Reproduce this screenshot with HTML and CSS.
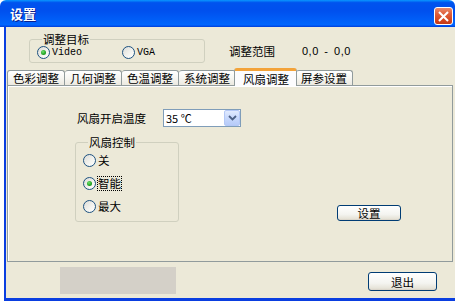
FILE: index.html
```html
<!DOCTYPE html>
<html lang="zh-CN">
<head>
<meta charset="utf-8">
<title>设置</title>
<link rel="stylesheet" href="styles.css">
</head>
<body>
<div class="window">
  <div class="titlebar">
    <span class="title">设置</span>
    <span class="close">
      <svg width="18" height="17" viewBox="0 0 18 17"><path d="M5 4.5 L13 12.5 M13 4.5 L5 12.5" stroke="#fff" stroke-width="2.2" stroke-linecap="square"/></svg>
    </span>
  </div>
  <div class="client">
    <div class="top">
      <div class="group target">
        <span class="group-title">调整目标</span>
        <div class="radio-row">
          <span class="radio"><span class="dot checked"></span><span class="latin">Video</span></span>
          <span class="radio vga"><span class="dot"></span><span class="latin">VGA</span></span>
        </div>
      </div>
      <span class="range-label">调整范围</span>
      <span class="range-value">0,0 - 0,0</span>
    </div>
    <div class="tabs">
      <span class="tab">色彩调整</span>
      <span class="tab">几何调整</span>
      <span class="tab">色温调整</span>
      <span class="tab">系统调整</span>
      <span class="tab active">风扇调整</span>
      <span class="tab">屏参设置</span>
    </div>
    <div class="panel">
      <div class="temp-row">
        <span class="temp-label">风扇开启温度</span>
        <span class="combo">
          <span class="combo-text">35 ℃</span>
          <span class="combo-btn">
            <svg width="9" height="6" viewBox="0 0 9 6"><path d="M1 1 L4.5 4.5 L8 1" fill="none" stroke="#4d6185" stroke-width="1.8"/></svg>
          </span>
        </span>
      </div>
      <div class="fan-row">
        <div class="group fan">
          <span class="group-title">风扇控制</span>
          <div class="radio-col">
            <span class="radio"><span class="dot"></span><span class="label">关</span></span>
            <span class="radio"><span class="dot checked"></span><span class="label focus">智能</span></span>
            <span class="radio"><span class="dot"></span><span class="label">最大</span></span>
          </div>
        </div>
        <span class="btn set-btn">设置</span>
      </div>
    </div>
    <div class="footer">
      <div class="placeholder"></div>
      <span class="btn exit-btn">退出</span>
    </div>
  </div>
</div>
</body>
</html>
```

FILE: styles.css
```css
* { box-sizing: border-box; }

body {
  margin: 0;
  background: #ffffff;
  font-family: "Noto Sans CJK SC", "Noto Sans", sans-serif;
  font-size: 11.5px;
  color: #000;
}

.window {
  width: 455px;
  height: 301px;
}

.titlebar {
  height: 27px;
  display: flex;
  justify-content: space-between;
  align-items: flex-start;
  padding: 0 2px 0 10px;
  border-radius: 6px 6px 0 0;
  background: linear-gradient(to bottom, #0997ff 0%, #0053ee 10%, #0050ee 40%, #0063fb 85%, #0066ff 92%, #003dd7 100%);
}

.title {
  line-height: 28px;
  color: #fff;
  font-weight: bold;
  font-size: 13px;
  text-shadow: 1px 1px 0 #0a1e8c;
}

.close {
  margin-top: 7px;
  width: 19px;
  height: 18px;
  border: 1px solid #fff;
  border-radius: 3px;
  background: linear-gradient(to bottom, #e98a6c 0%, #e0603c 35%, #d2431c 80%, #c23a18 100%);
  display: flex;
  align-items: center;
  justify-content: center;
}

.client {
  margin-left: 4px;
  height: 274px;
  background: #ece9d8;
  border-left: 2px solid #0a3ee0;
  border-bottom: 3px solid #0a3ee0;
}

/* top area */
.top {
  display: flex;
  align-items: center;
  padding: 12px 0 0 23px;
}

.group {
  border: 1px solid #d0d0bf;
  border-radius: 3px;
}

.group-title {
  display: block;
  width: max-content;
  height: 12px;
  line-height: 12px;
  margin: -7px 0 0 5px;
  padding: 0 1px;
  background: #ece9d8;
}

.target {
  width: 176px;
  height: 24px;
  padding: 0 0 0 7px;
}

.radio-row {
  display: flex;
  margin-top: 1px;
}

.radio {
  display: flex;
  align-items: center;
  height: 13px;
}

.vga { margin-left: 40px; }

.dot {
  width: 13px;
  height: 13px;
  border: 1px solid #1c5180;
  border-radius: 50%;
  background: linear-gradient(135deg, #dcdcd7 0%, #f4f4f0 60%, #ffffff 100%);
  display: flex;
  align-items: center;
  justify-content: center;
  flex: none;
}

.dot.checked::after {
  content: "";
  width: 5px;
  height: 5px;
  border-radius: 50%;
  background: radial-gradient(circle at 40% 35%, #6fe36f 0%, #21a121 60%, #1a8a1a 100%);
}

.latin {
  font-family: "Liberation Mono", "DejaVu Sans Mono", monospace;
  font-size: 10px;
  margin-left: 2px;
}

.range-label {
  margin-left: 24px;
}

.range-value {
  margin-left: 27px;
  font-family: "Liberation Sans", sans-serif;
  font-size: 11px;
  word-spacing: 2px;
  letter-spacing: 0.5px;
}

/* tabs */
.tabs {
  display: flex;
  align-items: flex-end;
  height: 17px;
  margin: 5px 0 0 1px;
}

.tab {
  height: 15px;
  line-height: 14px;
  padding: 0 5px;
  border: 1px solid #919b9c;
  border-bottom: none;
  border-left: none;
  border-radius: 3px 3px 0 0;
  background: linear-gradient(to bottom, #ffffff 0%, #f6f6f2 50%, #ece9e0 100%);
  white-space: nowrap;
}

.tab:first-child { border-left: 1px solid #919b9c; }

.tab.active {
  height: 18px;
  line-height: 17px;
  margin: 0 -1px -1px -2px;
  padding: 0 7px 0 8px;
  border-left: 1px solid #919b9c;
  border-top: 3px solid #f3a33a;
  background: #fcfcfe;
  position: relative;
  z-index: 1;
}

.tab.active + .tab { border-left: none; }

/* panel */
.panel {
  margin-left: 1px;
  width: 446px;
  height: 177px;
  border: 1px solid #919b9c;
  box-shadow: inset 1px 1px 0 #ffffff;
  background: #ece9d8;
}

.temp-row {
  display: flex;
  align-items: center;
  margin: 23px 0 0 69px;
  height: 18px;
}

.combo {
  margin-left: 17px;
  width: 78px;
  height: 18px;
  border: 1px solid #7f9db9;
  background: #fff;
  display: flex;
  align-items: center;
  justify-content: space-between;
}

.combo-text {
  padding-left: 2px;
  font-size: 11px;
}

.combo-btn {
  width: 16px;
  height: 16px;
  border: 1px solid #b4c8f6;
  border-radius: 2px;
  background: linear-gradient(to bottom, #e1eafe 0%, #c7d8fc 50%, #b7cbf8 100%);
  display: flex;
  align-items: center;
  justify-content: center;
}

.fan-row {
  display: flex;
  align-items: flex-end;
  margin: 15px 0 0 67px;
}

.fan {
  width: 104px;
  padding: 0 0 8px 7px;
}

.radio-col {
  display: flex;
  flex-direction: column;
  gap: 10px;
  padding-top: 6px;
}

.label {
  margin-left: 2px;
  line-height: 13px;
}

.label.focus {
  outline: 1px dotted #000;
  outline-offset: 0;
}

.btn {
  display: flex;
  align-items: center;
  justify-content: center;
  border: 1px solid #003c74;
  border-radius: 3px;
  background: linear-gradient(to bottom, #ffffff 0%, #f4f4f0 60%, #e6e3d8 90%, #d6d0c5 100%);
}

.set-btn {
  width: 64px;
  height: 16px;
  margin: 0 0 1px 158px;
}

/* footer */
.footer {
  display: flex;
  align-items: flex-start;
  padding-left: 54px;
  height: 36px;
}

.placeholder {
  margin-top: 5px;
  width: 116px;
  height: 27px;
  background: #d4d0c8;
}

.exit-btn {
  margin: 10px 0 0 192px;
  width: 69px;
  height: 19px;
}
```
